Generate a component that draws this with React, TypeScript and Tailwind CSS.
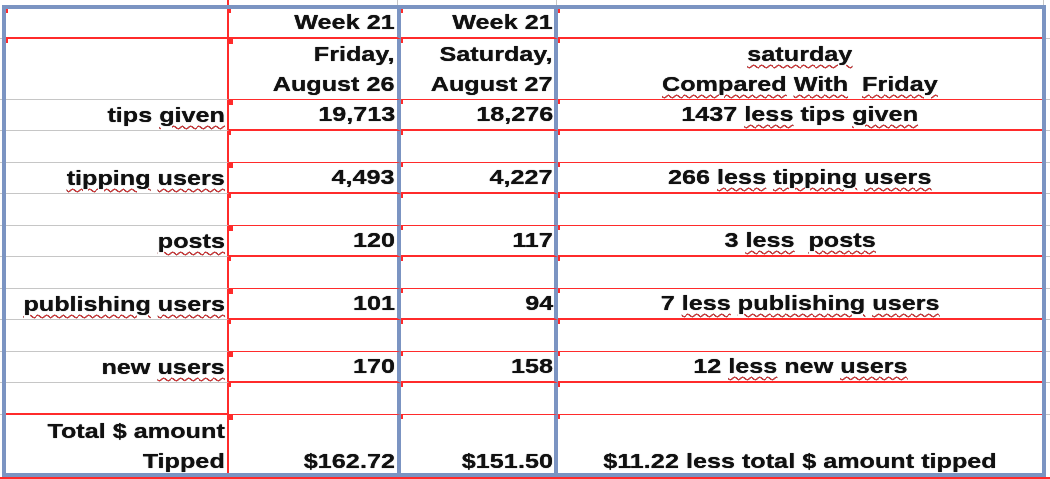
import React from "react";

const red = "border-b-2 border-b-[#ff2b2b]";
const redThin = "border-b border-b-[#ff2b2b]";
const gray = "border-b border-b-[#c6c6c6]";

interface RowDef {
  h: string;
  b1: string;
  b: string;
  mark1?: boolean;
  square?: boolean;
  top?: boolean;
  cells: [string, string, string, string];
}

// "~word~" gets the red spell-check squiggle
const rows: RowDef[] = [
  { h: "h-[30px]", b1: red, b: red, mark1: true, cells: ["", "Week 21", "Week 21", ""] },
  {
    h: "h-[61px]",
    b1: gray,
    b: redThin,
    mark1: true,
    square: true,
    cells: ["", "Friday,\nAugust 26", "Saturday,\nAugust 27", "~saturday~\n~Compared~ ~With~  ~Friday~"],
  },
  { h: "h-[31px]", b1: gray, b: red, square: true, cells: ["tips ~given~", "19,713", "18,276", "1437 ~less~ tips ~given~"] },
  { h: "h-[32px]", b1: gray, b: redThin, cells: ["", "", "", ""] },
  { h: "h-[31px]", b1: gray, b: red, square: true, cells: ["~tipping~ ~users~", "4,493", "4,227", "266 ~less~ ~tipping~ ~users~"] },
  { h: "h-[32px]", b1: gray, b: redThin, cells: ["", "", "", ""] },
  { h: "h-[31px]", b1: gray, b: red, square: true, cells: ["~posts~", "120", "117", "3 ~less~  ~posts~"] },
  { h: "h-[32px]", b1: gray, b: redThin, cells: ["", "", "", ""] },
  { h: "h-[31px]", b1: gray, b: red, square: true, cells: ["~publishing~ ~users~", "101", "94", "7 ~less~ ~publishing~ ~users~"] },
  { h: "h-[32px]", b1: gray, b: redThin, cells: ["", "", "", ""] },
  { h: "h-[31px]", b1: gray, b: red, square: true, cells: ["new ~users~", "170", "158", "12 ~less~ new ~users~"] },
  { h: "h-[32px]", b1: red, b: redThin, cells: ["", "", "", ""] },
  {
    h: "h-[58px]",
    b1: "",
    b: "",
    square: true,
    top: true,
    cells: ["Total $ amount\nTipped", "\n$162.72", "\n$151.50", "\n$11.22 less total $ amount tipped"],
  },
];

function Text({ value, center }: { value: string; center?: boolean }) {
  if (!value) return null;
  const parts = value.split("~");
  return (
    <span
      className={`inline-block whitespace-pre leading-[30px] scale-x-[1.2] [text-shadow:0_0_0.7px_#000] ${
        center ? "text-center origin-center" : "text-right origin-right"
      }`}
    >
      {parts.map((p, i) =>
        i % 2 === 1 ? (
          <span
            key={i}
            className="underline decoration-wavy decoration-[#e8393a] decoration-[1.3px] underline-offset-[3px]"
          >
            {p}
          </span>
        ) : (
          <React.Fragment key={i}>{p}</React.Fragment>
        )
      )}
    </span>
  );
}

function Tick({ square }: { square?: boolean }) {
  return square ? (
    <div className="absolute left-0 top-0 w-[4px] h-[5px] bg-[#ff2b2b]" />
  ) : (
    <div className="absolute left-0 top-0 w-[2px] h-[4px] bg-[#ff2b2b]" />
  );
}

function Gutter({ width }: { width: string }) {
  return (
    <div className={`${width} shrink-0 flex flex-col`}>
      <div className="h-[4px]" />
      {rows.map((r, i) => (
        <div key={i} className={`${r.h} ${i < rows.length - 1 ? gray : ""}`} />
      ))}
    </div>
  );
}

export default function App() {
  return (
    <div className="w-[1050px] h-[479px] bg-white overflow-hidden flex flex-col font-['Liberation_Sans',Arial,sans-serif] font-bold text-[21px] text-[#111]">
      {/* strip above the selection frame */}
      <div className="h-[5px] flex shrink-0">
        <div className="w-[229px] border-r-2 border-r-[#ff2b2b]" />
        <div className="w-[169px] border-r border-r-[#c6c6c6]" />
        <div className="w-[159px] border-r border-r-[#c6c6c6]" />
        <div className="w-[487px] border-r border-r-[#c6c6c6]" />
      </div>

      <div className="h-[472px] flex shrink-0">
        <Gutter width="w-[2px]" />
        <div className="w-[1044px] shrink-0 border-4 border-[#7b94c2] flex flex-col">
          {rows.map((r, i) => {
            const align = r.top ? "items-start overflow-hidden pt-[1px]" : "items-end";
            return (
              <div key={i} className="flex">
                <div
                  className={`relative w-[223px] shrink-0 flex justify-end pr-[2px] border-r-2 border-r-[#ff2b2b] ${r.h} ${r.b1} ${align}`}
                >
                  {r.mark1 && <Tick />}
                  <Text value={r.cells[0]} />
                </div>
                <div
                  className={`relative w-[172px] shrink-0 flex justify-end pr-[2px] border-r-4 border-r-[#7b94c2] ${r.h} ${r.b} ${align}`}
                >
                  <Tick square={r.square} />
                  <Text value={r.cells[1]} />
                </div>
                <div
                  className={`relative w-[157px] shrink-0 flex justify-end pr-[1px] border-r-4 border-r-[#7b94c2] ${r.h} ${r.b} ${align}`}
                >
                  <Tick />
                  <Text value={r.cells[2]} />
                </div>
                <div className={`relative flex-1 flex justify-center ${r.h} ${r.b} ${align}`}>
                  <Tick />
                  <Text value={r.cells[3]} center />
                </div>
              </div>
            );
          })}
        </div>
        <Gutter width="w-[4px]" />
      </div>

      <div className="h-[2px] bg-[#ff2b2b] shrink-0" />
    </div>
  );
}
